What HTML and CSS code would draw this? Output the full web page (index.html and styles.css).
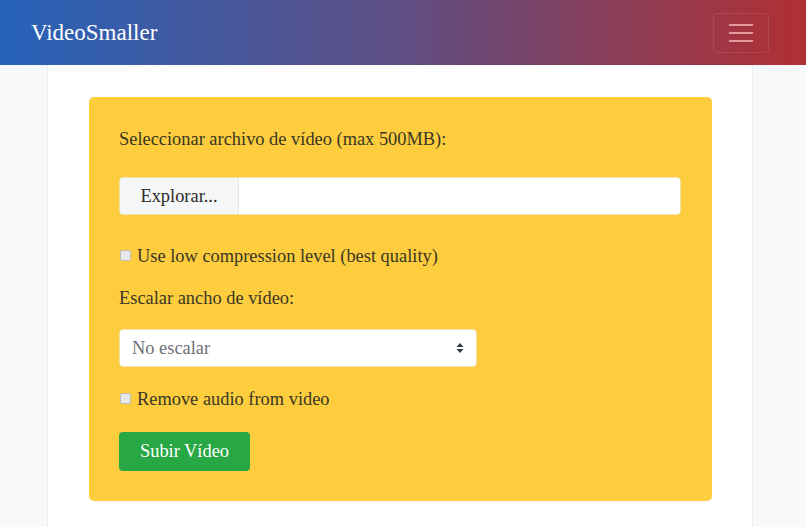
FILE: index.html
```html
<!DOCTYPE html>
<html lang="es">
<head>
    <meta charset="UTF-8">
    <meta name="viewport" content="width=device-width, initial-scale=1.0">
    <title>VideoSmaller</title>
    <link rel="stylesheet" href="styles.css">
</head>
<body>
    <header class="navbar">
        <a href="#" class="brand">VideoSmaller</a>
        <button class="toggler" type="button" aria-label="Menu">
            <span class="toggler-bar"></span>
            <span class="toggler-bar"></span>
            <span class="toggler-bar"></span>
        </button>
    </header>

    <div class="container">
        <form class="upload-card">
            <label class="field-label" for="video-file">Seleccionar archivo de vídeo (max 500MB):</label>
            <div class="file-group">
                <span class="file-button">Explorar...</span>
                <span class="file-name"></span>
            </div>

            <label class="check-row check-first">
                <input type="checkbox" class="check-box">
                <span>Use low compression level (best quality)</span>
            </label>

            <label class="field-label scale-label" for="scale">Escalar ancho de vídeo:</label>
            <div class="select-wrap">
                <select id="scale" class="select">
                    <option>No escalar</option>
                    <option>320</option>
                    <option>640</option>
                </select>
                <svg class="select-arrow" width="8" height="12" viewBox="0 0 8 12">
                    <path d="M4 1 L7.5 5 H0.5 Z" fill="#343a40"/>
                    <path d="M4 11 L7.5 7 H0.5 Z" fill="#343a40"/>
                </svg>
            </div>

            <label class="check-row check-second">
                <input type="checkbox" class="check-box">
                <span>Remove audio from video</span>
            </label>

            <button type="button" class="submit-button">Subir Vídeo</button>
        </form>
    </div>
</body>
</html>
```

FILE: styles.css
```css
body {
    margin: 0;
    background-color: #f8f9fa;
    font-family: "Liberation Serif", serif;
    color: #3a3626;
}

.navbar {
    height: 65px;
    display: flex;
    align-items: center;
    justify-content: space-between;
    padding: 0 37px 0 31px;
    background: linear-gradient(to right, #2763ba, #5f4e83 50%, #b12f33);
}

.brand {
    color: white;
    text-decoration: none;
    font-size: 23px;
}

.toggler {
    width: 56px;
    height: 40px;
    display: flex;
    flex-direction: column;
    align-items: center;
    justify-content: center;
    gap: 6px;
    background: transparent;
    border: 1px solid rgba(255, 255, 255, 0.1);
    border-radius: 4px;
    padding: 0;
}

.toggler-bar {
    display: block;
    width: 24px;
    height: 2px;
    background-color: rgba(255, 200, 200, 0.7);
}

.container {
    width: 706px;
    margin: 0 53px 0 47px;
    min-height: 462px;
    background-color: white;
    border-left: 1px solid #eceef0;
    border-right: 1px solid #eceef0;
    box-sizing: border-box;
    padding: 32px 40px 0 41px;
}

.upload-card {
    background-color: #fdcd3d;
    border-radius: 5px;
    padding: 30px 31px 30px 30px;
    display: flex;
    flex-direction: column;
    align-items: flex-start;
}

.field-label {
    font-size: 18.4px;
    line-height: 24px;
    margin-bottom: 26px;
}

.file-group {
    width: 100%;
    height: 38px;
    display: flex;
    background-color: white;
    border: 1px solid #f0e2b0;
    border-radius: 4px;
    box-sizing: border-box;
    overflow: hidden;
}

.file-button {
    width: 118px;
    display: flex;
    align-items: center;
    justify-content: center;
    background-color: #f5f6f8;
    border-right: 1px solid #e3e5e8;
    color: #2b2b2b;
    font-size: 18.4px;
}

.file-name {
    flex: 1;
}

.check-row {
    display: flex;
    align-items: center;
    gap: 6px;
    font-size: 18.4px;
    line-height: 24px;
}

.check-first {
    margin-top: 29px;
}

.check-second {
    margin-top: 20px;
}

.check-box {
    appearance: none;
    width: 11px;
    height: 11px;
    margin: 0 0 1px 1px;
    background-color: #e8e8e8;
    border: 1px solid #bdbdbd;
    border-radius: 2px;
}

.scale-label {
    margin-top: 18px;
    margin-bottom: 19px;
}

.select-wrap {
    position: relative;
    width: 358px;
}

.select {
    appearance: none;
    width: 100%;
    height: 38px;
    padding: 0 12px;
    font-family: "Liberation Serif", serif;
    font-size: 18.4px;
    color: #6c6f73;
    background-color: white;
    border: 1px solid #f0e2b0;
    border-radius: 4px;
}

.select-arrow {
    position: absolute;
    right: 13px;
    top: 13px;
}

.submit-button {
    margin-top: 21px;
    width: 131px;
    height: 39px;
    background-color: #28a745;
    color: white;
    border: none;
    border-radius: 4px;
    font-family: "Liberation Serif", serif;
    font-size: 18.4px;
}
```
